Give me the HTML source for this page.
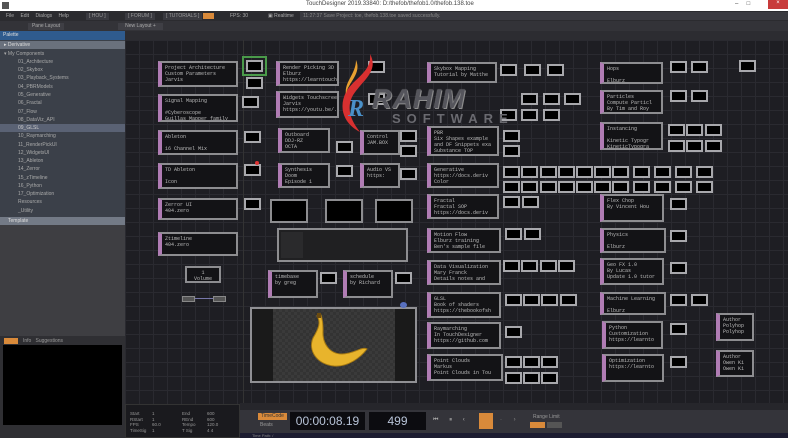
<!DOCTYPE html>
<html><head><meta charset="utf-8"><style>
*{margin:0;padding:0;box-sizing:border-box}
body{width:788px;height:438px;overflow:hidden;background:#1d1d22;font-family:"Liberation Sans",sans-serif;position:relative}
div{position:absolute}
.c{background:#131316;border:2px solid #8d8d90;border-left:4px solid #b07cb4;font:5px "Liberation Mono",monospace;color:#bbb;padding:2px 3px;line-height:6px;white-space:nowrap;overflow:hidden}
.t{width:17px;height:12px;background:#000;border:2px solid #a8a8ac}
.li{left:0;width:125px;height:8px;font-size:5px;color:#aaa;padding-left:18px;line-height:8px}
.bt{background:#3a3a40;color:#999;font-size:5px;height:7px;line-height:7px;padding:0 3px;top:2px}
</style></head><body>
<div style="left:0;top:0;width:788px;height:11px;background:#fff"></div>
<div style="left:2px;top:2px;width:7px;height:7px;background:#555"></div>
<div style="left:306px;top:1px;font-size:6px;color:#444">TouchDesigner 2019.33840: D:/thefob/thefob1.0/thefob.138.toe</div>
<div style="left:735px;top:1px;font-size:6px;color:#444">–&nbsp;&nbsp;&nbsp;&nbsp;&nbsp;□</div>
<div style="left:768px;top:0;width:20px;height:9px;background:#c83b3b;color:#fff;font-size:6px;text-align:center">×</div>
<div style="left:0;top:11px;width:788px;height:10px;background:#2b2b2f"></div>
<div style="left:6px;top:13px;font-size:5px;color:#aaa;word-spacing:5px">File Edit Dialogs Help</div>
<div class="bt" style="left:86px;top:13px">[ HOU ]</div>
<div class="bt" style="left:125px;top:13px">[ FORUM ]</div>
<div class="bt" style="left:163px;top:13px">[ TUTORIALS ]</div>
<div style="left:203px;top:13px;width:11px;height:6px;background:#d98a3a"></div>
<div style="left:230px;top:13px;font-size:5px;color:#aaa">FPS: 30</div>
<div style="left:268px;top:13px;font-size:5px;color:#aaa">▣ Realtime</div>
<div style="left:300px;top:12px;width:488px;height:8px;background:#3a3a40;font-size:5px;color:#888;padding-left:3px;line-height:8px">11:27:37 Save Project: toe, thefob.138.toe saved successfully.</div>
<div style="left:0;top:21px;width:788px;height:10px;background:#333338"></div>
<div style="left:28px;top:23px;width:36px;height:7px;background:#3f3f45;font-size:5px;color:#aaa;text-align:center;line-height:7px">Pane Layout</div>
<div style="left:118px;top:23px;width:45px;height:7px;background:#3f3f45;font-size:5px;color:#aaa;text-align:center;line-height:7px">New Layout +</div>
<div style="left:0;top:31px;width:125px;height:9px;background:#2f5b8e;font-size:5px;color:#ddd;padding-left:3px;line-height:9px">Palette</div>
<div style="left:0;top:40px;width:125px;height:177px;background:#3b4049"></div>
<div style="left:0;top:41px;width:125px;height:8px;background:#6a717d;font-size:5px;color:#ddd;padding-left:4px;line-height:8px">▸ Derivative</div>
<div class="li" style="top:50px;padding-left:4px">▾ My Components</div>
<div class="li" style="top:58px">01_Architecture</div>
<div class="li" style="top:66px">02_Skybox</div>
<div class="li" style="top:74px">03_Playback_Systems</div>
<div class="li" style="top:83px">04_PBRModels</div>
<div class="li" style="top:91px">05_Generative</div>
<div class="li" style="top:99px">06_Fractal</div>
<div class="li" style="top:108px">07_Flow</div>
<div class="li" style="top:116px">08_DataViz_API</div>
<div class="li" style="top:124px;background:#5a6274;color:#ccc">09_GLSL</div>
<div class="li" style="top:132px">10_Raymarching</div>
<div class="li" style="top:141px">11_RenderPickUI</div>
<div class="li" style="top:149px">12_WidgetsUI</div>
<div class="li" style="top:157px">13_Ableton</div>
<div class="li" style="top:165px">14_Zerror</div>
<div class="li" style="top:174px">15_zTimeline</div>
<div class="li" style="top:182px">16_Python</div>
<div class="li" style="top:190px">17_Optimization</div>
<div class="li" style="top:198px">Resources</div>
<div class="li" style="top:207px">_Utility</div>
<div style="left:0;top:217px;width:125px;height:8px;background:#737a86;font-size:5px;color:#ddd;padding-left:8px;line-height:8px">Template</div>
<div style="left:0;top:225px;width:125px;height:111px;background:#3e3e42"></div>
<div style="left:0;top:336px;width:125px;height:102px;background:#2f2f33"></div>
<div style="left:4px;top:338px;width:14px;height:6px;background:#d98a3a"></div>
<div style="left:23px;top:338px;font-size:5px;color:#999">Info&nbsp;&nbsp;&nbsp;Suggestions</div>
<div style="left:3px;top:345px;width:119px;height:80px;background:#000"></div>
<div style="left:125px;top:31px;width:663px;height:9px;background:#2c2c31"></div>
<div style="left:125px;top:40px;width:663px;height:364px;background-color:#1e1e23;background-image:linear-gradient(#2a2a30 1px,transparent 1px),linear-gradient(90deg,#2a2a30 1px,transparent 1px);background-size:14px 14px"></div>
<div style="left:243px;top:40px;width:1px;height:364px;background:#333"></div>

<div class="c" style="left:158px;top:61px;width:80px;height:26px">Project Architecture<br>Custom Parameters<br>Jarvis</div>
<div class="c" style="left:158px;top:94px;width:80px;height:28px">Signal Mapping<br><br>#Cyberoscope<br>Guillas Mapper family</div>
<div class="c" style="left:158px;top:130px;width:80px;height:25px">Ableton<br><br>16 Channel Mix</div>
<div class="c" style="left:158px;top:163px;width:80px;height:26px">TD Ableton<br><br>Icon</div>
<div class="c" style="left:158px;top:198px;width:80px;height:22px">Zerror UI<br>404.zero</div>
<div class="c" style="left:158px;top:232px;width:80px;height:24px">Ztimeline<br>404.zero</div>
<div style="left:242px;top:56px;width:25px;height:20px;border:2px solid #4a9a4a"></div>
<div class="t" style="left:246px;top:60px"></div>
<div class="t" style="left:246px;top:77px"></div>
<div class="t" style="left:242px;top:96px"></div>
<div class="t" style="left:244px;top:131px"></div>
<div class="t" style="left:244px;top:164px"></div>
<div style="left:255px;top:161px;width:4px;height:4px;background:#d33;border-radius:50%"></div>
<div class="t" style="left:244px;top:198px"></div>
<div class="c" style="left:276px;top:61px;width:63px;height:25px">Render Picking 3D UI<br>Elburz<br>https://learntouchdes</div>
<div class="c" style="left:276px;top:91px;width:63px;height:27px">Widgets Touchscreen<br>Jarvis<br>https://youtu.be/..</div>
<div class="c" style="left:278px;top:128px;width:52px;height:25px">Outboard<br>DDJ-RZ<br>OCTA</div>
<div class="c" style="left:278px;top:163px;width:52px;height:25px">Synthesis<br>Doom<br>Episode 1</div>
<div class="t" style="left:336px;top:141px"></div>
<div class="t" style="left:336px;top:165px"></div>
<div class="c" style="left:360px;top:130px;width:40px;height:25px">Control<br>JAM.BOX</div>
<div class="c" style="left:360px;top:163px;width:40px;height:25px">Audio VS<br>https:</div>
<div class="t" style="left:368px;top:61px"></div>
<div class="t" style="left:368px;top:93px"></div>
<div class="t" style="left:400px;top:130px"></div>
<div class="t" style="left:400px;top:145px"></div>
<div class="t" style="left:400px;top:168px"></div>
<div style="left:270px;top:199px;width:38px;height:24px;background:#000;border:2px solid #8d8d90"></div>
<div style="left:325px;top:199px;width:38px;height:24px;background:#000;border:2px solid #8d8d90"></div>
<div style="left:375px;top:199px;width:38px;height:24px;background:#000;border:2px solid #8d8d90"></div>
<div style="left:277px;top:228px;width:131px;height:34px;background:#202022;border:2px solid #8d8d90"></div>
<div style="left:281px;top:232px;width:22px;height:26px;background:#2a2a2c"></div>
<div class="c" style="left:268px;top:270px;width:50px;height:28px">timebase<br>by greg</div>
<div class="t" style="left:320px;top:272px"></div>
<div class="c" style="left:343px;top:270px;width:50px;height:28px">schedule<br>by Richard</div>
<div class="t" style="left:395px;top:272px"></div>
<div class="c" style="left:185px;top:266px;width:36px;height:17px;border-left:2px solid #8d8d90;text-align:center">1<br>Volume</div>
<div style="left:182px;top:296px;width:13px;height:6px;border:1px solid #888;background:#555"></div>
<div style="left:213px;top:296px;width:13px;height:6px;border:1px solid #888;background:#555"></div>
<div style="left:195px;top:298px;width:18px;height:1px;background:#77a"></div>
<div style="left:250px;top:307px;width:167px;height:76px;background:#1a1a1a;border:2px solid #909094"></div>
<div style="left:273px;top:309px;width:122px;height:72px;background-color:#3a3a3a;background-image:linear-gradient(45deg,#333 25%,transparent 25%,transparent 75%,#333 75%),linear-gradient(45deg,#333 25%,transparent 25%,transparent 75%,#333 75%);background-size:6px 6px;background-position:0 0,3px 3px"></div>
<svg style="position:absolute;left:300px;top:312px" width="72" height="58" viewBox="0 0 72 58"><path d="M17 4 C21 10 19 16 13 26 C8 38 16 52 34 54 C48 55 60 46 67 37 C62 34 54 42 42 42 C30 42 22 32 23 18 C23 11 22 6 21 3 Z" fill="#e8b42c" stroke="#a77a12" stroke-width="1"/><path d="M17 1 L21 1 L21 6 L17 6Z" fill="#6a4a10"/></svg>
<div style="left:400px;top:302px;width:7px;height:6px;background:#5870c0;border-radius:50%"></div>
<div class="c" style="left:427px;top:62px;width:70px;height:21px">Skybox Mapping<br>Tutorial by Matthe</div>
<div class="c" style="left:427px;top:126px;width:72px;height:30px">PBR<br>Six Shapes example<br>and DF Snippets exa<br>Substance TOP</div>
<div class="c" style="left:427px;top:163px;width:72px;height:25px">Generative<br>https://docs.deriv<br>Color</div>
<div class="c" style="left:427px;top:194px;width:72px;height:25px">Fractal<br>Fractal SOP<br>https://docs.deriv</div>
<div class="c" style="left:427px;top:228px;width:74px;height:25px">Motion Flow<br>Elburz training<br>Ben's sample file</div>
<div class="c" style="left:427px;top:260px;width:74px;height:25px">Data Visualization<br>Mary Franck<br>Details notes and</div>
<div class="c" style="left:427px;top:292px;width:74px;height:26px">GLSL<br>Book of shaders<br>https://thebookofsh</div>
<div class="c" style="left:427px;top:322px;width:74px;height:27px">Raymarching<br>In TouchDesigner<br>https://github.com</div>
<div class="c" style="left:427px;top:354px;width:76px;height:27px">Point Clouds<br>Markus<br>Point Clouds in Tou</div>
<div class="t" style="left:500px;top:64px"></div><div class="t" style="left:524px;top:64px"></div><div class="t" style="left:547px;top:64px"></div>
<div class="t" style="left:521px;top:93px"></div><div class="t" style="left:543px;top:93px"></div><div class="t" style="left:564px;top:93px"></div>
<div class="t" style="left:500px;top:109px"></div><div class="t" style="left:521px;top:109px"></div><div class="t" style="left:543px;top:109px"></div>
<div class="t" style="left:503px;top:130px"></div><div class="t" style="left:503px;top:145px"></div>
<div class="t" style="left:503px;top:166px"></div><div class="t" style="left:521px;top:166px"></div><div class="t" style="left:540px;top:166px"></div><div class="t" style="left:558px;top:166px"></div><div class="t" style="left:576px;top:166px"></div><div class="t" style="left:594px;top:166px"></div><div class="t" style="left:612px;top:166px"></div><div class="t" style="left:633px;top:166px"></div><div class="t" style="left:654px;top:166px"></div><div class="t" style="left:675px;top:166px"></div><div class="t" style="left:696px;top:166px"></div>
<div class="t" style="left:503px;top:181px"></div><div class="t" style="left:521px;top:181px"></div><div class="t" style="left:540px;top:181px"></div><div class="t" style="left:558px;top:181px"></div><div class="t" style="left:576px;top:181px"></div><div class="t" style="left:594px;top:181px"></div><div class="t" style="left:612px;top:181px"></div><div class="t" style="left:633px;top:181px"></div><div class="t" style="left:654px;top:181px"></div><div class="t" style="left:675px;top:181px"></div><div class="t" style="left:696px;top:181px"></div>
<div class="t" style="left:503px;top:196px"></div><div class="t" style="left:522px;top:196px"></div>
<div class="t" style="left:505px;top:228px"></div><div class="t" style="left:524px;top:228px"></div>
<div class="t" style="left:503px;top:260px"></div><div class="t" style="left:521px;top:260px"></div><div class="t" style="left:540px;top:260px"></div><div class="t" style="left:558px;top:260px"></div>
<div class="t" style="left:505px;top:294px"></div><div class="t" style="left:523px;top:294px"></div><div class="t" style="left:541px;top:294px"></div><div class="t" style="left:560px;top:294px"></div>
<div class="t" style="left:505px;top:326px"></div>
<div class="t" style="left:505px;top:356px"></div><div class="t" style="left:523px;top:356px"></div><div class="t" style="left:541px;top:356px"></div>
<div class="t" style="left:505px;top:372px"></div><div class="t" style="left:523px;top:372px"></div><div class="t" style="left:541px;top:372px"></div>
<div class="c" style="left:600px;top:62px;width:63px;height:22px">Hops<br><br>Elburz</div>
<div class="c" style="left:600px;top:90px;width:63px;height:24px">Particles<br>Compute Particl<br>By Tim and Roy</div>
<div class="c" style="left:600px;top:122px;width:63px;height:28px">Instancing<br><br>Kinetic Typogr<br>KineticTypogra</div>
<div class="c" style="left:600px;top:194px;width:64px;height:28px">Flex Chop<br>By Vincent Hou</div>
<div class="c" style="left:600px;top:228px;width:66px;height:25px">Physics<br><br>Elburz</div>
<div class="c" style="left:600px;top:258px;width:64px;height:27px">Geo FX 1.0<br>By Lucas<br>Update 1.0 tutor</div>
<div class="c" style="left:600px;top:292px;width:66px;height:23px">Machine Learning<br><br>Elburz</div>
<div class="c" style="left:602px;top:321px;width:61px;height:28px">Python<br>Customization<br>https://learnto</div>
<div class="c" style="left:602px;top:354px;width:62px;height:28px">Optimization<br>https://learnto</div>
<div class="t" style="left:670px;top:61px"></div><div class="t" style="left:691px;top:61px"></div><div class="t" style="left:739px;top:60px"></div>
<div class="t" style="left:670px;top:90px"></div><div class="t" style="left:691px;top:90px"></div>
<div class="t" style="left:668px;top:124px"></div><div class="t" style="left:686px;top:124px"></div><div class="t" style="left:705px;top:124px"></div>
<div class="t" style="left:668px;top:140px"></div><div class="t" style="left:686px;top:140px"></div><div class="t" style="left:705px;top:140px"></div>
<div class="t" style="left:670px;top:198px"></div><div class="t" style="left:670px;top:230px"></div><div class="t" style="left:670px;top:262px"></div>
<div class="t" style="left:670px;top:294px"></div><div class="t" style="left:691px;top:294px"></div>
<div class="t" style="left:670px;top:323px"></div><div class="t" style="left:670px;top:356px"></div>
<div class="c" style="left:716px;top:313px;width:38px;height:28px">Author<br>Polyhop<br>Polyhop</div>
<div class="c" style="left:716px;top:350px;width:38px;height:27px">Author<br>Owen Ki<br>Owen Ki</div>
<svg style="position:absolute;left:330px;top:52px" width="50" height="85" viewBox="0 0 50 85"><path d="M40 2 C50 20 30 30 22 45 C16 58 22 70 30 80 C14 72 8 56 16 40 C24 26 42 20 40 2Z" fill="#d83030"/><path d="M26 8 C32 22 18 30 16 42 C14 30 26 22 26 8Z" fill="#e8a030"/><text x="18" y="64" font-family="Liberation Serif,serif" font-style="italic" font-size="24" font-weight="bold" fill="#4a90c8">R</text></svg>
<div style="left:372px;top:84px;font:italic bold 27px 'Liberation Sans',sans-serif;color:#55555c;letter-spacing:1px;text-shadow:0 0 1px #aaa,1px 1px 0 #888">RAHIM</div>
<div style="left:392px;top:111px;font:bold 13px 'Liberation Sans',sans-serif;color:#6a6a70;letter-spacing:6px">SOFTWARE</div>
<div style="left:240px;top:403px;width:548px;height:7px;background:#26262b"></div>
<div style="left:125px;top:404px;width:115px;height:34px;background:#1a1a1e;border:1px solid #333"></div>
<div style="left:130px;top:411px;font-size:4.5px;color:#999;line-height:5.5px">Start<br>RStart<br>FPS<br>TimeSig</div>
<div style="left:152px;top:411px;font-size:4.5px;color:#999;line-height:5.5px">1<br>1<br>60.0<br>1</div>
<div style="left:182px;top:411px;font-size:4.5px;color:#999;line-height:5.5px">End<br>REnd<br>Tempo<br>T Sig</div>
<div style="left:207px;top:411px;font-size:4.5px;color:#999;line-height:5.5px">600<br>600<br>120.0<br>4 4</div>
<div style="left:240px;top:410px;width:548px;height:23px;background:#34343a"></div>
<div style="left:258px;top:413px;width:29px;height:7px;background:#d98a3a;font-size:5px;color:#333;text-align:center;line-height:7px">TimeCode</div>
<div style="left:260px;top:422px;font-size:5px;color:#999">Beats</div>
<div style="left:290px;top:412px;width:75px;height:18px;background:#0c0c10;color:#b8c4d8;font-size:12px;text-align:center;line-height:18px">00:00:08.19</div>
<div style="left:369px;top:412px;width:57px;height:18px;background:#0c0c10;color:#b8c4d8;font-size:12px;text-align:center;line-height:18px">499</div>
<div style="left:433px;top:417px;font-size:6px;color:#aaa;word-spacing:9px">⏮ ⏸ ‹</div>
<div style="left:479px;top:413px;width:14px;height:16px;background:#d98a3a"></div>
<div style="left:500px;top:417px;font-size:6px;color:#888;word-spacing:10px">· ›</div>
<div style="left:533px;top:414px;font-size:5px;color:#999">Range Limit</div>
<div style="left:530px;top:422px;width:15px;height:6px;background:#d98a3a"></div>
<div style="left:547px;top:422px;width:15px;height:6px;background:#555"></div>
<div style="left:240px;top:433px;width:548px;height:5px;background:#1c1c30;font-size:4px;color:#888;padding-left:12px">Time Path: /</div>
</body></html>
